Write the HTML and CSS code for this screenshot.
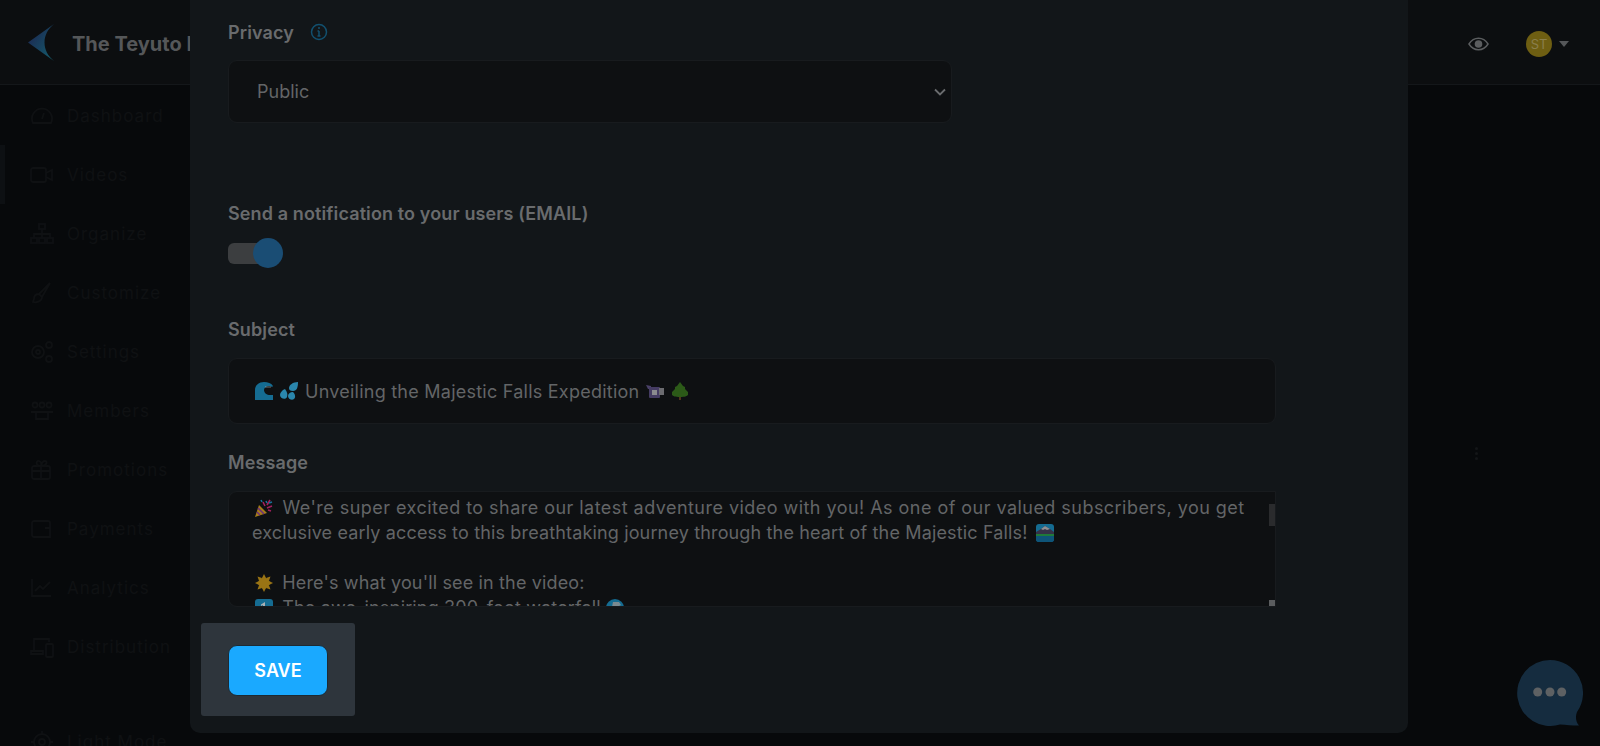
FILE: index.html
```html
<!DOCTYPE html>
<html lang="en">
<head>
    <meta charset="UTF-8">
    <meta name="viewport" content="width=device-width, initial-scale=1.0">
    <title>The Teyuto</title>
    <link rel="stylesheet" href="styles.css">
</head>
<body>
    <svg class="sprite" aria-hidden="true">
        <defs>
            <linearGradient id="logo-grad" x1="0" y1="0" x2="1" y2="1">
                <stop offset="0" stop-color="#1d1f4d"/>
                <stop offset="1" stop-color="#14606e"/>
            </linearGradient>
        </defs>
        <symbol id="e-wave" viewBox="0 0 18 18">
            <path d="M0 18V8C0 3 4 0 9 0c4 0 7 1 9 4l-1 1c-1-1-2-1-3-1-3 0-5 2-5 4 0 3 3 5 6 5h3v5z" fill="#156c92"/>
            <path d="M10 5h6" stroke="#cfd4d6" stroke-opacity=".5" stroke-width="1"/>
        </symbol>
        <symbol id="e-drops" viewBox="0 0 18 18">
            <path d="M9 6c0-3 4-6 9-6 0 5-1 9-5 9-3 0-4-1-4-3z" fill="#2a86ac"/>
            <path d="M0 13c0-2 2-5 5-6 2 3 3 5 2 8-1 3-7 2-7-2z" fill="#2a86ac"/>
            <path d="M8 14c0-2 2-4 5-4 2 2 3 5 1 7-2 2-6 0-6-3z" fill="#2a86ac"/>
        </symbol>
        <symbol id="e-camera" viewBox="0 0 18 18">
            <path d="M0 3l5 1v3H2z" fill="#4a4168"/>
            <rect x="3" y="5" width="11" height="11" rx="1" fill="#453c63"/>
            <rect x="6" y="8" width="5" height="5" fill="#8b8b8f"/>
            <rect x="13" y="6" width="5" height="7" fill="#6c6c70"/>
        </symbol>
        <symbol id="e-tree" viewBox="0 0 18 18">
            <rect x="8" y="14" width="2" height="4" fill="#50341c"/>
            <path d="M9 0l3 4 2 1v2l3 3v3c-1 1-3 2-8 2s-7-1-8-2v-3l3-3V5l2-1z" fill="#2c5a18"/>
        </symbol>
        <symbol id="e-party" viewBox="0 0 18 18">
            <path d="M0 18l4-12 8 8z" fill="#a67c18"/>
            <path d="M2 13l3 3M3 9l6 6" stroke="#6b2f7c" stroke-width="1.5"/>
            <path d="M8 3l2 4M15 1l-3 5M12 9l5-2M16 12l-3-1" stroke="#a1215e" stroke-width="1.6"/>
            <path d="M6 1l1 2M11 2l1 2M14 4l3-1" stroke="#186f97" stroke-width="1.6"/>
        </symbol>
        <symbol id="e-mountain" viewBox="0 0 18 18">
            <rect width="18" height="18" rx="3" fill="#156c92"/>
            <path d="M0 8l5-3 4-3 5 3 4 3v3H0z" fill="#353248"/>
            <path d="M5 5l4-3 5 3-3 1-2-1-2 1z" fill="#8f8f92"/>
            <rect y="10" width="18" height="2" fill="#1f7a3a"/>
            <path d="M0 12h18v3a3 3 0 0 1-3 3H3a3 3 0 0 1-3-3z" fill="#0e5478"/>
        </symbol>
        <symbol id="e-burst" viewBox="0 0 18 18">
            <circle cx="9" cy="9" r="5.6" fill="#9a7414"/>
            <path d="M9 0l2 4H7zM9 18l2-4H7zM0 9l4 2V7zM18 9l-4 2V7zM2.5 2.5l4.5 1.6-2.9 2.9zM15.500 2.500L11 4.100l2.900 2.900zM2.500 15.500L7 13.900l-2.900-2.900zM15.500 15.500L11 13.900l2.900-2.900z" fill="#9a7414"/>
        </symbol>
        <symbol id="e-keycap" viewBox="0 0 18 18">
            <rect width="18" height="18" rx="3" fill="#156c92"/>
            <path d="M10 3v9H8V6L6 7V5.500z" fill="#a9b0b4"/>
        </symbol>
        <symbol id="e-globe" viewBox="0 0 18 18">
            <circle cx="9" cy="9" r="9" fill="#156c92"/>
            <path d="M7 3h6l2 3-4 2-2 3-3-3z" fill="#7b8a90"/>
        </symbol>
    </svg>

    <div class="app">
        <header class="topbar">
            <div class="brand">
                <svg class="brand-logo" viewBox="0 0 26 37"><path d="M0 18.500L26 0C20 5 16.500 11 16.500 18.500S20 32 26 37z" fill="url(#logo-grad)"/></svg>
                <span class="brand-name">The Teyuto Demo</span>
            </div>
            <div class="topbar-right">
                <svg class="eye-icon" viewBox="0 0 22 14"><path d="M1 7c2.500-4 6-6 10-6s7.500 2 10 6c-2.500 4-6 6-10 6S3.500 11 1 7z" fill="none" stroke="#5b5d5f" stroke-width="1.500"/><circle cx="11" cy="7" r="4" fill="#5b5d5f"/></svg>
                <div class="avatar">ST</div>
                <span class="avatar-caret"></span>
            </div>
        </header>
        <div class="layout">
            <nav class="sidebar">
                <a class="nav-item"><svg class="nav-icon" viewBox="0 0 24 24"><path d="M3 19a10 10 0 1 1 18 0zM12 15l2-6"/></svg>Dashboard</a>
                <a class="nav-item nav-item-active"><svg class="nav-icon" viewBox="0 0 24 24"><rect x="1" y="5" width="15" height="14" rx="2"/><path d="M16 10l6-3v10l-6-3"/></svg>Videos</a>
                <a class="nav-item"><svg class="nav-icon" viewBox="0 0 24 24"><rect x="9" y="2" width="6" height="5"/><rect x="1" y="16" width="6" height="5"/><rect x="9" y="16" width="6" height="5"/><rect x="17" y="16" width="6" height="5"/><path d="M12 7v9M4 16v-4h16v4"/></svg>Organize</a>
                <a class="nav-item"><svg class="nav-icon" viewBox="0 0 24 24"><path d="M20 2L9 13l3 3L20 2zM9 13c-4 0-5 3-5 5l-1 3c4 1 9-1 9-5"/></svg>Customize</a>
                <a class="nav-item"><svg class="nav-icon" viewBox="0 0 24 24"><circle cx="8" cy="12" r="6"/><circle cx="8" cy="12" r="2"/><circle cx="19" cy="5" r="3"/><circle cx="19" cy="19" r="3"/></svg>Settings</a>
                <a class="nav-item"><svg class="nav-icon" viewBox="0 0 24 24"><circle cx="5" cy="6" r="2.500"/><circle cx="12" cy="6" r="2.500"/><circle cx="19" cy="6" r="2.500"/><path d="M1 13h22M6 12v8h12v-8"/></svg>Members</a>
                <a class="nav-item"><svg class="nav-icon" viewBox="0 0 24 24"><rect x="2" y="8" width="18" height="13" rx="2"/><path d="M2 13h18M11 8v13M11 8C5 8 6 2 9 3s2 5 2 5c0 0 1-5 4-5s2 5-4 5"/></svg>Promotions</a>
                <a class="nav-item"><svg class="nav-icon" viewBox="0 0 24 24"><path d="M2 6a2 2 0 0 1 2-2h14a2 2 0 0 1 2 2v14H4a2 2 0 0 1-2-2zM15 11h5"/></svg>Payments</a>
                <a class="nav-item"><svg class="nav-icon" viewBox="0 0 24 24"><path d="M2 3v17h19M5 15l5-5 3 3 7-7"/></svg>Analytics</a>
                <a class="nav-item"><svg class="nav-icon" viewBox="0 0 24 24"><path d="M4 16V4h15v3M1 16h12v3H1z"/><rect x="16" y="9" width="7" height="13" rx="1"/></svg>Distribution</a>
                <a class="nav-item nav-item-bottom"><svg class="nav-icon" viewBox="0 0 24 24"><circle cx="12" cy="12" r="8"/><circle cx="12" cy="12" r="3"/><path d="M12 1v3M12 20v3M1 12h3M20 12h3"/></svg>Light Mode</a>
            </nav>
            <main class="content">
                <div class="kebab"><span></span><span></span><span></span></div>
            </main>
        </div>
    </div>

    <!-- edit dialog, scrolled down so the top is cut off -->
    <section class="modal">
        <div class="label-row">
            <label class="field-label">Privacy</label>
            <svg class="info-icon" viewBox="0 0 18 18"><circle cx="9" cy="9" r="7.500"/><path d="M9 8v5M7.500 13h3M7.500 8H9"/><circle class="info-dot" cx="9" cy="5" r="1"/></svg>
        </div>
        <div class="select-box">
            <span>Public</span>
            <svg class="chevron" viewBox="0 0 12 8"><path d="M1 1.500l5 5 5-5"/></svg>
        </div>

        <label class="field-label notify-label">Send a notification to your users (EMAIL)</label>
        <div class="toggle"><span class="toggle-thumb"></span></div>

        <label class="field-label subject-label">Subject</label>
        <div class="text-input">
            <svg class="emoji"><use href="#e-wave"/></svg>
            <svg class="emoji"><use href="#e-drops"/></svg>
            <span>Unveiling the Majestic Falls Expedition</span>
            <svg class="emoji"><use href="#e-camera"/></svg>
            <svg class="emoji"><use href="#e-tree"/></svg>
        </div>

        <label class="field-label message-label">Message</label>
        <div class="text-area">
            <p class="line-wide"><svg class="emoji emoji-lead"><use href="#e-party"/></svg> We're super excited to share our latest adventure video with you! As one of our valued subscribers, you get</p>
            <p class="line-flush">exclusive early access to this breathtaking journey through the heart of the Majestic Falls! <svg class="emoji emoji-tail"><use href="#e-mountain"/></svg></p>
            <p class="line-gap"><svg class="emoji emoji-lead"><use href="#e-burst"/></svg> Here's what you'll see in the video:</p>
            <p><svg class="emoji emoji-lead"><use href="#e-keycap"/></svg> The awe-inspiring 300-foot waterfall <svg class="emoji"><use href="#e-globe"/></svg></p>
            <span class="scroll-thumb"></span>
            <span class="resize-corner"></span>
        </div>

        <div class="save-spot">
            <button class="save-button">SAVE</button>
        </div>
    </section>

    <div class="chat-bubble">
        <svg viewBox="0 0 66 66">
            <path d="M33 0A33 33 0 1 0 43 64.500C49 65 55 65.500 62 65.500 59 62 58 57 60 52A33 33 0 0 0 33 0z" fill="#152c3f"/>
            <circle cx="20.700" cy="32" r="4.500" fill="#5e6163"/>
            <circle cx="33" cy="32" r="4.500" fill="#5e6163"/>
            <circle cx="44.700" cy="32" r="4.500" fill="#5e6163"/>
        </svg>
    </div>
</body>
</html>
```

FILE: styles.css
```css
:root {
    --page-bg: #07090b;
    --topbar-bg: #0c0e10;
    --modal-bg: #121619;
    --field-bg: #0e1012;
    --field-border: #181b1e;
    --label-color: #696b6d;
    --text-color: #636567;
    --nav-color: #0f1113;
    --spot-bg: #2e353c;
    --save-color: #1aa9ff;
}

html, body {
    height: 100%;
}

body {
    font-family: Inter, 'Open Sans', sans-serif;
    margin: 0;
    background-color: var(--page-bg);
    color: var(--text-color);
    overflow: hidden;
}

/* display:none would drop the logo gradient too */
.sprite {
    position: absolute;
    width: 0;
    height: 0;
}

.app {
    display: flex;
    flex-direction: column;
    height: 100%;
}

.topbar {
    display: flex;
    justify-content: space-between;
    align-items: center;
    height: 85px;
    box-sizing: border-box;
    padding: 0 31px 0 28px;
    background: var(--topbar-bg);
    border-bottom: 1px solid #14171a;
    flex-shrink: 0;
}

.brand {
    display: flex;
    align-items: center;
    gap: 18px;
    width: 162px;
}

.brand-logo {
    width: 26px;
    height: 37px;
    flex-shrink: 0;
}

.brand-name {
    min-width: 0;
    padding-top: 3px;
    overflow: hidden;
    font-size: 20px;
    font-weight: 700;
    color: #555759;
    white-space: nowrap;
}

.topbar-right {
    display: flex;
    align-items: center;
    margin-top: 3px;
}

.eye-icon {
    width: 21px;
    height: 14px;
    margin-right: 37px;
}

.avatar {
    width: 26px;
    height: 26px;
    border-radius: 50%;
    background: #6e5e12;
    color: #8a7f4c;
    font-size: 13px;
    line-height: 26px;
    text-align: center;
}

.avatar-caret {
    width: 0;
    height: 0;
    margin-left: 7px;
    border-left: 5px solid transparent;
    border-right: 5px solid transparent;
    border-top: 6px solid #555759;
}

.layout {
    display: flex;
    flex: 1;
    min-height: 0;
}

.sidebar {
    width: 190px;
    flex-shrink: 0;
    display: flex;
    flex-direction: column;
    padding-top: 1px;
}

.nav-item {
    display: flex;
    align-items: center;
    gap: 13px;
    height: 59px;
    padding-left: 30px;
    flex-shrink: 0;
    font-size: 17px;
    letter-spacing: 1px;
    color: var(--nav-color);
}

.nav-item-active {
    box-shadow: inset 5px 0 0 #0d1013;
}

.nav-item-bottom {
    margin-top: 36px;
}

.nav-icon {
    width: 24px;
    height: 24px;
    fill: none;
    stroke: var(--nav-color);
    stroke-width: 1.8;
}

.content {
    flex: 1;
    position: relative;
}

.kebab {
    position: absolute;
    top: 362px;
    right: 122px;
    display: flex;
    flex-direction: column;
    gap: 2px;
}

.kebab span {
    width: 3px;
    height: 3px;
    border-radius: 50%;
    background: #141618;
}

.modal {
    position: absolute;
    top: 0;
    left: 190px;
    width: 1218px;
    height: 733px;
    box-sizing: border-box;
    padding: 20px 132px 0 38px;
    background: var(--modal-bg);
    border-radius: 0 0 10px 10px;
}

.label-row {
    display: flex;
    align-items: center;
    gap: 16px;
}

.field-label {
    display: block;
    padding-top: 2px;
    font-size: 18px;
    line-height: 22px;
    letter-spacing: .12px;
    font-weight: 600;
    color: var(--label-color);
}

.info-icon {
    width: 18px;
    height: 18px;
    fill: none;
    stroke: #12506f;
    stroke-width: 1.500;
}

.info-dot {
    fill: #12506f;
    stroke: none;
}

.select-box {
    display: flex;
    justify-content: space-between;
    align-items: center;
    width: 724px;
    height: 63px;
    box-sizing: border-box;
    margin-top: 16px;
    padding: 0 5px 0 28px;
    font-size: 18px;
    background: var(--field-bg);
    border: 1px solid var(--field-border);
    border-radius: 9px;
}

.chevron {
    width: 12px;
    height: 8px;
    fill: none;
    stroke: #6a6c6e;
    stroke-width: 1.800;
}

.notify-label {
    margin-top: 78px;
}

.toggle {
    position: relative;
    width: 42px;
    height: 21px;
    margin-top: 18px;
    background: #3c3e40;
    border-radius: 6px;
}

.toggle-thumb {
    position: absolute;
    top: -5px;
    left: 25px;
    width: 30px;
    height: 30px;
    border-radius: 50%;
    background: #1a4d74;
}

.subject-label {
    margin-top: 53px;
}

.text-input {
    display: flex;
    align-items: center;
    gap: 7px;
    height: 66px;
    box-sizing: border-box;
    margin-top: 17px;
    padding-left: 26px;
    font-size: 18px;
    letter-spacing: .24px;
    background: var(--field-bg);
    border: 1px solid var(--field-border);
    border-radius: 9px;
}

.emoji {
    width: 18px;
    height: 18px;
    flex-shrink: 0;
    vertical-align: -3px;
}

.emoji-lead {
    margin-right: 4px;
}

.emoji-tail {
    margin-left: 3px;
}

.message-label {
    margin-top: 26px;
}

.text-area {
    position: relative;
    height: 116px;
    box-sizing: border-box;
    margin-top: 17px;
    padding: 3px 26px 0 23px;
    overflow: hidden;
    font-size: 18px;
    line-height: 25px;
    letter-spacing: .15px;
    white-space: nowrap;
    background: var(--field-bg);
    border: 1px solid var(--field-border);
    border-radius: 9px 0 0 9px;
}

.text-area p {
    margin: 0;
    padding-left: 3px;
}

.text-area .line-wide {
    letter-spacing: .46px;
}

.text-area .line-flush {
    padding-left: 0;
}

.text-area .line-gap {
    margin-top: 25px;
}

.scroll-thumb {
    position: absolute;
    top: 12px;
    right: 0;
    width: 6px;
    height: 22px;
    background: #2a2b2d;
}

.resize-corner {
    position: absolute;
    bottom: 0;
    right: 0;
    width: 6px;
    height: 6px;
    background: #5b5d5f;
}

.save-spot {
    display: flex;
    align-items: center;
    justify-content: center;
    width: 154px;
    height: 93px;
    margin: 16px 0 0 -27px;
    background: var(--spot-bg);
    border-radius: 3px;
}

.save-button {
    width: 100px;
    height: 51px;
    margin-top: 2px;
    font-family: inherit;
    font-size: 18px;
    font-weight: 600;
    color: #fff;
    background: var(--save-color);
    border: 1px solid #1d2a33;
    border-radius: 9px;
}

.chat-bubble {
    position: absolute;
    top: 660px;
    left: 1517px;
    width: 66px;
    height: 66px;
}

.chat-bubble svg {
    display: block;
    width: 66px;
    height: 66px;
}
```
